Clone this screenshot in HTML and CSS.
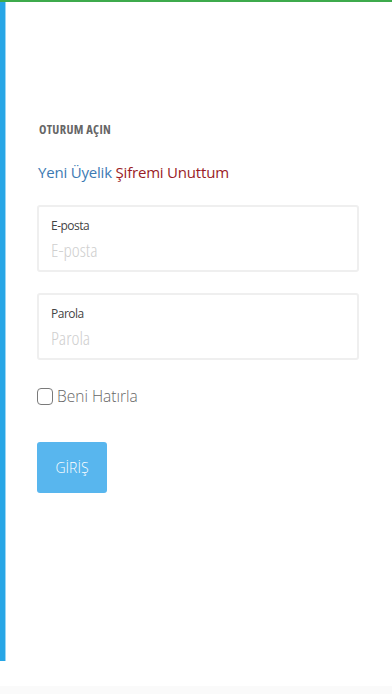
FILE: index.html
```html
<!DOCTYPE html>
<html lang="tr">
<head>
<meta charset="utf-8">
<title>Oturum Açın</title>
<link rel="stylesheet" href="styles.css">
</head>
<body>
<div class="page">
  <div class="rail"></div>
  <main class="main">
    <h1 class="title">OTURUM AÇIN</h1>
    <div class="links">
      <a class="link-new" href="#">Yeni Üyelik</a>
      <a class="link-forgot" href="#">Şifremi Unuttum</a>
    </div>
    <form class="form">
      <label class="field">
        <span class="field-label">E-posta</span>
        <input class="field-input" type="email" placeholder="E-posta">
      </label>
      <label class="field">
        <span class="field-label">Parola</span>
        <input class="field-input" type="password" placeholder="Parola">
      </label>
      <label class="remember">
        <span class="check"></span>
        <span class="remember-text">Beni Hatırla</span>
      </label>
      <button class="submit" type="button">GİRİŞ</button>
    </form>
  </main>
</div>
<div class="footer"></div>
</body>
</html>
```
FILE: styles.css
```css
* { box-sizing: border-box; }
html, body { margin: 0; padding: 0; background: #ffffff; }
body {
  font-family: "Open Sans", "Noto Sans", sans-serif;
  width: 392px;
  height: 696px;
  overflow: hidden;
}
.page {
  display: flex;
  border-top: 2px solid #3daa4c;
  height: 661px;
}
.rail {
  width: 6px;
  flex: 0 0 6px;
  background: #27a6e6;
  border-right: 1px solid #9ad6f5;
}
.main {
  flex: 1;
  padding: 120px 33px 0 32px;
}
.title {
  margin: 0 0 0 1px;
  font-stretch: 75%;
  font-size: 12.5px;
  letter-spacing: 0.3px;
  line-height: 15px;
  font-weight: 700;
  color: #666666;
}
.links {
  margin-top: 24px;
  font-size: 15px;
  letter-spacing: -0.2px;
  line-height: 22px;
}
.links a { text-decoration: none; }
.link-new { color: #3d7ab3; }
.link-forgot { color: #9a1c26; }
.form {
  margin-top: 22px;
  margin-left: -1px;
  display: flex;
  flex-direction: column;
  align-items: flex-start;
}
.field {
  display: flex;
  flex-direction: column;
  width: 322px;
  height: 67px;
  padding: 11px 12px 8px 12px;
  border: 2px solid #efefef;
  border-radius: 3px;
  margin-bottom: 21px;
}
.field-label {
  font-size: 12px;
  letter-spacing: -0.5px;
  line-height: 16px;
  color: #444444;
}
.field-input {
  margin-top: 4px;
  border: 0;
  padding: 0;
  outline: none;
  font-family: inherit;
  font-stretch: 75%;
  font-size: 19px;
  font-weight: 300;
  line-height: 24px;
  height: 24px;
  color: #333333;
  background: transparent;
}
.field-input::placeholder { color: #cfcfcf; }
.remember {
  display: flex;
  align-items: center;
  gap: 4px;
  margin-top: 6px;
  height: 18px;
}
.check {
  width: 16px;
  height: 17px;
  border: 1.5px solid #7a7a7a;
  border-radius: 4px;
}
.remember-text {
  font-size: 15.5px;
  font-weight: 300;
  color: #666666;
  line-height: 20px;
}
.submit {
  margin-top: 37px;
  width: 70px;
  height: 51px;
  border: 0;
  border-radius: 3px;
  background: #58b6ee;
  color: #ffffff;
  font-family: inherit;
  font-size: 14px;
  font-weight: 300;
  padding: 0;
}
.footer {
  height: 8px;
  margin-top: 25px;
  background: #fafafa;
}
```
